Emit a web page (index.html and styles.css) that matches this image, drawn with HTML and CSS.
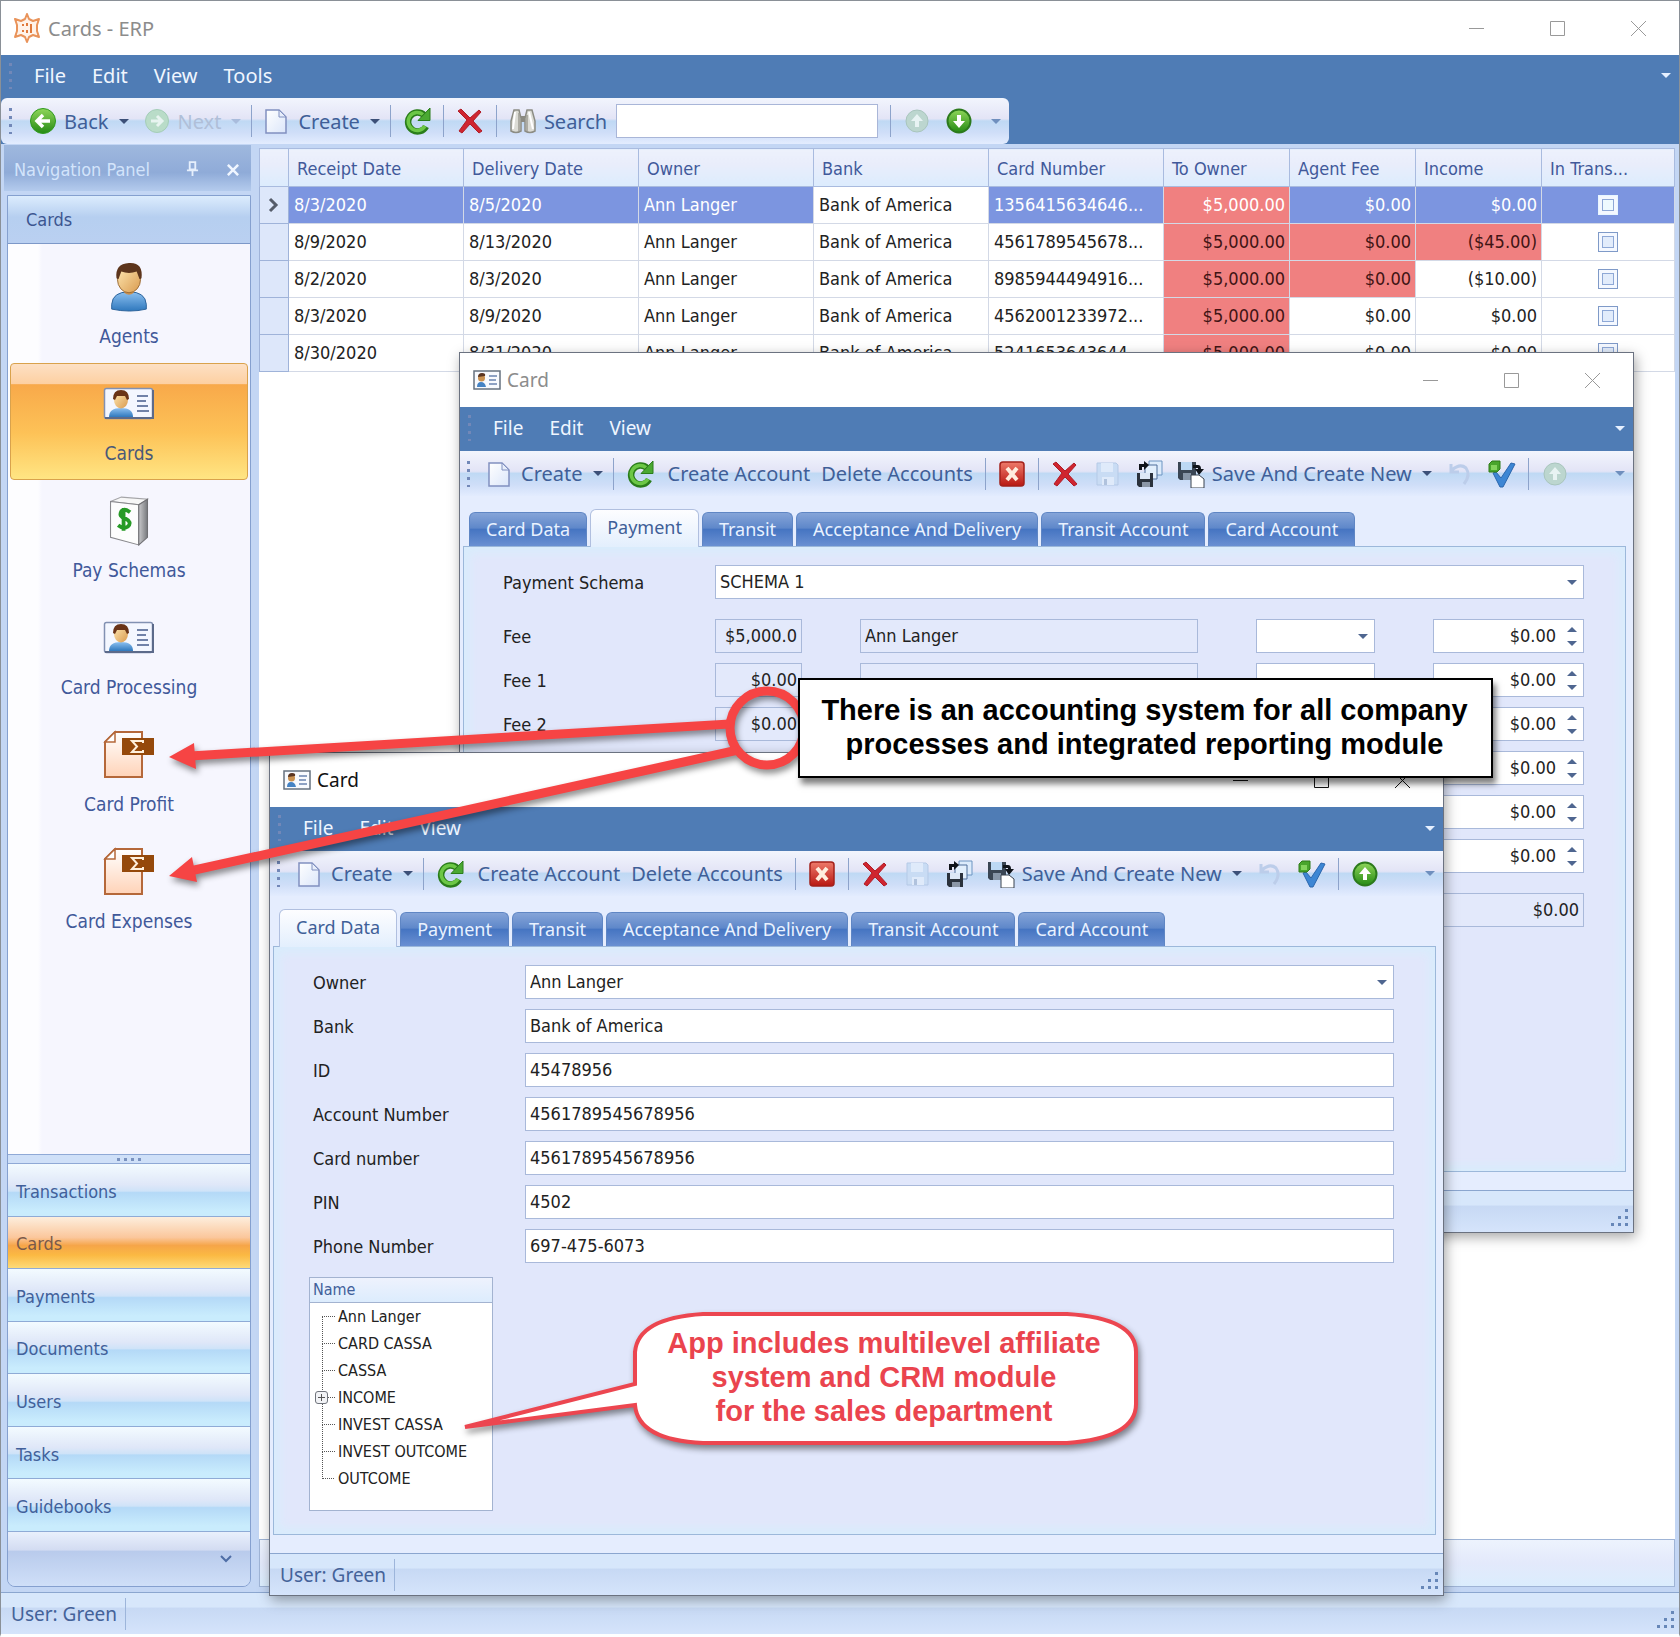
FILE: index.html
```html
<!DOCTYPE html>
<html lang="en">
<head>
<meta charset="utf-8">
<title>Cards - ERP</title>
<link rel="stylesheet" href="styles.css">
</head>
<body>
<svg class="defs" width="0" height="0" aria-hidden="true">
  <defs>
    <linearGradient id="g-green" x1="0" y1="0" x2="0" y2="1"><stop offset="0" stop-color="#8fd65a"/><stop offset="1" stop-color="#258a14"/></linearGradient>
    <linearGradient id="g-red" x1="0" y1="0" x2="0" y2="1"><stop offset="0" stop-color="#ee7a6a"/><stop offset="1" stop-color="#b81812"/></linearGradient>
    <linearGradient id="g-page" x1="0" y1="0" x2="1" y2="1"><stop offset="0" stop-color="#ffffff"/><stop offset="1" stop-color="#dbe6fa"/></linearGradient>
    <linearGradient id="g-blue" x1="0" y1="0" x2="0" y2="1"><stop offset="0" stop-color="#8cc0f0"/><stop offset="1" stop-color="#2f78bd"/></linearGradient>
    <linearGradient id="g-skin" x1="0" y1="0" x2="1" y2="1"><stop offset="0" stop-color="#ffe9b4"/><stop offset="1" stop-color="#d99a4e"/></linearGradient>
    <linearGradient id="g-report" x1="0" y1="0" x2="0" y2="1"><stop offset="0" stop-color="#ffffff"/><stop offset="1" stop-color="#ffd3b8"/></linearGradient>
    <linearGradient id="g-side" x1="0" y1="0" x2="1" y2="0"><stop offset="0" stop-color="#c9c9cc"/><stop offset="1" stop-color="#77797d"/></linearGradient>
  </defs>
  <symbol id="i-gear" viewBox="0 0 28 30"><path d="M12 6L14 1l2 5 4 2 6-2-2 6v6l2 6-6-2-4 2-2 5-2-5-4-2-6 2 2-6v-6L2 6l6 2z" fill="#fff3ea" stroke="#e9935a" stroke-width="2" stroke-linejoin="round"/><path d="M10 11v2m0 4v2m4-9v3m0 4v3m4-9v9" stroke="#e07a3c" stroke-width="2" fill="none"/></symbol>
  <symbol id="i-left" viewBox="0 0 28 28"><circle cx="14" cy="14" r="12.500" fill="url(#g-green)" stroke="#2f9a1e"/><path d="M21 14H8m6-6l-6 6 6 6" fill="none" stroke="#fff" stroke-width="3.500"/></symbol>
  <symbol id="i-right" viewBox="0 0 28 28"><circle cx="14" cy="14" r="11.500" fill="#b9dcc8" stroke="#a4cdb8"/><path d="M8 14h11m-5-5l5 5-5 5" fill="none" stroke="#e8f4f0" stroke-width="3"/></symbol>
  <symbol id="i-up" viewBox="0 0 28 28"><circle cx="14" cy="14" r="11.500" fill="url(#g-green)" stroke="#2c7a1c" stroke-width="2"/><path d="M14 7l6 7h-4v6h-4v-6H8z" fill="#fff"/></symbol>
  <symbol id="i-upoff" viewBox="0 0 28 28"><circle cx="14" cy="14" r="11" fill="#bcd6cf" stroke="#a9c5bd"/><path d="M14 7l6 7h-4v6h-4v-6H8z" fill="#e8f3f3"/></symbol>
  <symbol id="i-down" viewBox="0 0 28 28"><circle cx="14" cy="14" r="11.500" fill="url(#g-green)" stroke="#2c7a1c" stroke-width="2"/><path d="M14 21l6-7h-4V8h-4v6H8z" fill="#fff"/></symbol>
  <symbol id="i-page" viewBox="0 0 24 28"><path d="M2 3h13l7 7v16H2z" fill="url(#g-page)" stroke="#8190c0" stroke-width="1.500"/><path d="M15 3v7h7z" fill="#e8eefb" stroke="#8190c0"/></symbol>
  <symbol id="i-refresh" viewBox="0 0 28 28"><path d="M21 8A9.500 9.500 0 1 0 23 19.500" fill="none" stroke="#2a7d1a" stroke-width="6.500"/><path d="M20 7.500A9 9 0 1 0 22 19" fill="none" stroke="#6cc746" stroke-width="3.500"/><path d="M27 1v12.500H15z" fill="#4aa932" stroke="#2a7d1a"/></symbol>
  <symbol id="i-x" viewBox="0 0 28 28"><path d="M2 4l3-2 9 9 9-8 2 2-8 9 9 10-3 2-9-9-8 9-3-2 8-11z" fill="#cf2530" stroke="#b01c26"/></symbol>
  <symbol id="i-find" viewBox="0 0 28 28"><path d="M5 3h5l2 8v13q-5 3-10 0V14zM18 3h5l3 11v10q-5 3-10 0V11z" fill="#dcdcd6" stroke="#8c8c84" stroke-width="1.500"/><path d="M12 9h4v6h-4z" fill="#8b8a82"/><path d="M6 5L4 22M20 5l4 17" stroke="#fff" stroke-width="2"/><path d="M10 6v18M18 8v16" stroke="#9d9c94" stroke-width="1.500"/></symbol>
  <symbol id="i-close" viewBox="0 0 28 28"><rect x="2" y="2" width="24" height="24" rx="3" fill="url(#g-red)" stroke="#a3201a" stroke-width="1.500"/><path d="M9 8l10 12M19 8L9 20" stroke="#ffeede" stroke-width="4"/></symbol>
  <symbol id="i-saveoff" viewBox="0 0 28 28"><path d="M4 3h19l2 2v20H4z" fill="#c9dcf4" stroke="#b5c9e6"/><path d="M8 3h12v9H8zM9 17h12v8H9z" fill="#dfeafa"/><path d="M11 19h3v6h-3z" fill="#b0c2dd"/></symbol>
  <symbol id="i-savecopy" viewBox="0 0 28 28"><path d="M14 1h13v14H14z" fill="#dcebfb" stroke="#6d95c2"/><path d="M10 5h12v14H10z" fill="#e2effc" stroke="#4f6f9b"/><path d="M2 13h16v14H4l-2-2z" fill="#2b323c"/><path d="M5 13h10v6H5z" fill="#dce7f6"/><path d="M7 22h8v5H7z" fill="#8c97a6"/><path d="M4 10V4h5V1l5 4-5 5V7H7v3z" fill="#10141a"/></symbol>
  <symbol id="i-savenew" viewBox="0 0 28 28"><path d="M1 2h18v18H3l-2-2z" fill="#3a4654"/><path d="M4 2h11v8H4z" fill="#bcd8f4"/><path d="M6 13h8v7H6z" fill="#8796a8"/><path d="M14 15h8l5 4v9H14z" fill="#fff" stroke="#39424e"/><path d="M16 5h5q3 0 3 4h3l-5 6-4-6h3V8h-5z" fill="#10141a"/></symbol>
  <symbol id="i-undo" viewBox="0 0 28 28"><path d="M5 4v8h8M6 10q8-7 14-2 5 7-2 16" fill="none" stroke="#bccdea" stroke-width="3"/></symbol>
  <symbol id="i-check" viewBox="0 0 28 28"><path d="M5 13l3-1 5 6L23 3l4 1-12 23h-3z" fill="#3d86d4" stroke="#2b66ad"/><path d="M1 4l3-3h8v8l-3 3H1z" fill="#49a52c" stroke="#2f7a18"/><path d="M3 5h6v5H3z" fill="#83d35c"/></symbol>
  <symbol id="i-user" viewBox="0 0 40 52"><path d="M2 49V44q1-13 18-13t18 13v5q-17 4-36 0z" fill="url(#g-blue)" stroke="#2a6199"/><path d="M15 28h10v4q-5 4-10 0z" fill="#c98f4e"/><ellipse cx="20" cy="18" rx="12" ry="14" fill="url(#g-skin)" stroke="#9a6a34"/><path d="M7 17Q5 2 20 1t13 16l-2 1-3-8q-8 3-16 0l-3 8z" fill="#5d351c"/></symbol>
  <symbol id="i-card" viewBox="0 0 52 34"><rect x="1.500" y="1.500" width="48" height="30" rx="2" fill="#f4f7ff" stroke="#8291b2" stroke-width="1.500"/><path d="M2 31h48V3" fill="none" stroke="#5c6a8a" stroke-width="2"/><path d="M6 30q0-9 12-9t12 9z" fill="url(#g-blue)"/><ellipse cx="18" cy="13" rx="7" ry="8.500" fill="url(#g-skin)"/><path d="M10 12q0-9 8-9t8 9l-2 1-2-4h-8l-2 4z" fill="#6a3417"/><path d="M34 9h11M34 14h9m-9 5h11m-11 5h12" stroke="#7182a8" stroke-width="2"/></symbol>
  <symbol id="i-cardsm" viewBox="0 0 28 20"><rect x="1" y="1" width="26" height="18" fill="#f8fafe" stroke="#66717f" stroke-width="1.500"/><path d="M4 17q0-5 4-5t5 5z" fill="#4583c4"/><circle cx="8.500" cy="8" r="3.500" fill="#c99150"/><path d="M5 7q0-4 4-4t3 3z" fill="#5b3520"/><path d="M16 6h8m-8 4h7m-7 4h8" stroke="#6a84b0" stroke-width="1.500"/></symbol>
  <symbol id="i-pay" viewBox="0 0 38 46"><path d="M2 5L12 1l24 2-8 5z" fill="#f7f7f7" stroke="#a5a5a8"/><path d="M2 5l26 3v37L2 38z" fill="#fdfdfd" stroke="#88888c"/><path d="M28 8l8-5v35l-8 7z" fill="url(#g-side)" stroke="#707074"/><path d="M20 15q-5-4-8-1-3 5 4 7 6 3 2 7-4 3-9-1m5-16v21" fill="none" stroke="#279a26" stroke-width="3.500"/></symbol>
  <symbol id="i-report" viewBox="0 0 52 48"><path d="M12 1h27v45H2V11z" fill="url(#g-report)" stroke="#b5683a" stroke-width="2"/><path d="M12 1v10H2z" fill="#fff" stroke="#b5683a" stroke-width="1.500"/><rect x="19" y="7" width="32" height="17" fill="#95490b"/><path d="M40 12v-2H29l5 5.500-5 5.500h11v-2" fill="none" stroke="#fff0dc" stroke-width="2"/></symbol>
  <symbol id="i-min" viewBox="0 0 17 17"><path d="M1 8.500h15" stroke="currentColor"/></symbol>
  <symbol id="i-max" viewBox="0 0 17 17"><path d="M1.500 1.500h14v14h-14z" fill="none" stroke="currentColor"/></symbol>
  <symbol id="i-cls" viewBox="0 0 17 17"><path d="M1 1l15 15M16 1L1 16" stroke="currentColor"/></symbol>
  <symbol id="i-grip" viewBox="0 0 20 20"><path d="M15 1h3v3h-3zM8 8h3v3H8zm7 0h3v3h-3zM1 15h3v3H1zm7 0h3v3H8zm7 0h3v3h-3z" fill="#6787b8"/></symbol>
</svg>

<main class="app">
  <header class="titlebar">
    <svg class="app-icon"><use href="#i-gear"/></svg>
    <h1 class="title">Cards - ERP</h1>
    <div class="winctl">
      <button aria-label="Minimize"><svg><use href="#i-min"/></svg></button>
      <button aria-label="Maximize"><svg><use href="#i-max"/></svg></button>
      <button aria-label="Close"><svg><use href="#i-cls"/></svg></button>
    </div>
  </header>
  <nav class="menubar menubar-main">
    <i class="grip"></i>
    <button>File</button><button>Edit</button><button>View</button><button>Tools</button>
    <i class="more"></i>
  </nav>
  <div class="toolstrip">
    <div class="toolbar toolbar-main">
      <i class="grip"></i>
      <button><svg class="ic"><use href="#i-left"/></svg>Back<i class="arr"></i></button>
      <button class="off" disabled><svg class="ic"><use href="#i-right"/></svg>Next<i class="arr"></i></button>
      <i class="sep"></i>
      <button class="new"><svg class="ic page"><use href="#i-page"/></svg>Create<i class="arr"></i></button>
      <i class="sep"></i>
      <button aria-label="Refresh"><svg class="ic"><use href="#i-refresh"/></svg></button>
      <i class="sep"></i>
      <button aria-label="Delete"><svg class="ic"><use href="#i-x"/></svg></button>
      <i class="sep"></i>
      <label class="search"><svg class="ic"><use href="#i-find"/></svg>Search<input type="text"></label>
      <i class="sep"></i>
      <button aria-label="Previous record" disabled><svg class="ic"><use href="#i-upoff"/></svg></button>
      <button aria-label="Next record"><svg class="ic"><use href="#i-down"/></svg></button>
      <i class="more"></i>
    </div>
  </div>

  <div class="workspace">
    <aside class="nav">
      <div class="nav-head">Navigation Panel
        <svg class="pin" viewBox="0 0 14 18"><path d="M4 1h6v8H4zM1 10h12M7 10v6" fill="none" stroke="#e6effc" stroke-width="2"/></svg>
        <svg class="nx" viewBox="0 0 14 14"><path d="M1 1l12 12M13 1L1 13" stroke="#f0f6ff" stroke-width="3"/></svg>
      </div>
      <div class="nav-box">
        <h2 class="nav-group">Cards</h2>
        <div class="nav-items">
          <button><svg class="ni"><use href="#i-user"/></svg>Agents</button>
          <button class="on"><svg class="ni"><use href="#i-card"/></svg>Cards</button>
          <button><svg class="ni"><use href="#i-pay"/></svg>Pay Schemas</button>
          <button><svg class="ni"><use href="#i-card"/></svg>Card Processing</button>
          <button><svg class="ni"><use href="#i-report"/></svg>Card Profit</button>
          <button><svg class="ni"><use href="#i-report"/></svg>Card Expenses</button>
        </div>
        <div class="nav-split"><i></i><i></i><i></i><i></i></div>
        <div class="nav-tabs">
          <button>Transactions</button><button class="on">Cards</button><button>Payments</button><button>Documents</button><button>Users</button><button>Tasks</button><button>Guidebooks</button>
        </div>
        <div class="nav-foot"><svg viewBox="0 0 12 8"><path d="M1 1l5 5 5-5" fill="none" stroke="#4f6ea6" stroke-width="2"/></svg></div>
      </div>
    </aside>
    <section class="content">
      <table class="grid">
        <colgroup><col class="c-ind"><col class="c-w"><col class="c-w"><col class="c-w"><col class="c-w"><col class="c-w"><col class="c-n"><col class="c-n"><col class="c-n"><col></colgroup>
        <thead><tr><th></th><th>Receipt Date</th><th>Delivery Date</th><th>Owner</th><th>Bank</th><th>Card Number</th><th>To Owner</th><th>Agent Fee</th><th>Income</th><th>In Trans...</th></tr></thead>
        <tbody>
          <tr class="sel"><td class="ind"><svg viewBox="0 0 12 16"><path d="M2 2l6 6-6 6" fill="none" stroke="#555c6a" stroke-width="3"/></svg></td><td>8/3/2020</td><td>8/5/2020</td><td>Ann Langer</td><td class="focus">Bank of America</td><td>1356415634646...</td><td class="num bad">$5,000.00</td><td class="num">$0.00</td><td class="num">$0.00</td><td class="chk"><input type="checkbox" aria-label="In transit"></td></tr>
          <tr><td class="ind"></td><td>8/9/2020</td><td>8/13/2020</td><td>Ann Langer</td><td>Bank of America</td><td>4561789545678...</td><td class="num bad">$5,000.00</td><td class="num bad">$0.00</td><td class="num bad">($45.00)</td><td class="chk"><input type="checkbox" aria-label="In transit"></td></tr>
          <tr><td class="ind"></td><td>8/2/2020</td><td>8/3/2020</td><td>Ann Langer</td><td>Bank of America</td><td>8985944494916...</td><td class="num bad">$5,000.00</td><td class="num bad">$0.00</td><td class="num">($10.00)</td><td class="chk"><input type="checkbox" aria-label="In transit"></td></tr>
          <tr><td class="ind"></td><td>8/3/2020</td><td>8/9/2020</td><td>Ann Langer</td><td>Bank of America</td><td>4562001233972...</td><td class="num bad">$5,000.00</td><td class="num">$0.00</td><td class="num">$0.00</td><td class="chk"><input type="checkbox" aria-label="In transit"></td></tr>
          <tr><td class="ind"></td><td>8/30/2020</td><td>8/31/2020</td><td>Ann Langer</td><td>Bank of America</td><td>5241653643644...</td><td class="num bad">$5,000.00</td><td class="num">$0.00</td><td class="num">$0.00</td><td class="chk"><input type="checkbox" aria-label="In transit"></td></tr>
        </tbody>
      </table>
      <div class="grid-foot"></div>
    </section>
  </div>
  <footer class="status"><span>User: Green</span><svg class="resize"><use href="#i-grip"/></svg></footer>
</main>

<section class="win win-payment" aria-label="Card payment">
  <header class="titlebar">
    <svg class="card-icon"><use href="#i-cardsm"/></svg>
    <h2 class="title">Card</h2>
    <div class="winctl">
      <button aria-label="Minimize"><svg><use href="#i-min"/></svg></button>
      <button aria-label="Maximize"><svg><use href="#i-max"/></svg></button>
      <button aria-label="Close"><svg><use href="#i-cls"/></svg></button>
    </div>
  </header>
  <nav class="menubar"><i class="grip"></i><button>File</button><button>Edit</button><button>View</button><i class="more"></i></nav>
  <div class="toolbar">
    <i class="grip"></i>
    <button class="new"><svg class="ic page"><use href="#i-page"/></svg>Create<i class="arr"></i></button>
    <i class="sep"></i>
    <button class="account"><svg class="ic"><use href="#i-refresh"/></svg>Create Account</button>
    <button>Delete Accounts</button>
    <i class="sep"></i>
    <button aria-label="Close record"><svg class="ic"><use href="#i-close"/></svg></button>
    <i class="sep"></i>
    <button aria-label="Delete"><svg class="ic"><use href="#i-x"/></svg></button>
    <button aria-label="Save" disabled><svg class="ic"><use href="#i-saveoff"/></svg></button>
    <button aria-label="Save and close"><svg class="ic"><use href="#i-savecopy"/></svg></button>
    <button><svg class="ic"><use href="#i-savenew"/></svg>Save And Create New<i class="arr"></i></button>
    <button aria-label="Undo" disabled><svg class="ic"><use href="#i-undo"/></svg></button>
    <button aria-label="Validate"><svg class="ic"><use href="#i-check"/></svg></button>
    <i class="sep"></i>
    <button aria-label="Previous record" disabled><svg class="ic"><use href="#i-upoff"/></svg></button>
    <i class="more"></i>
  </div>
  <div class="tabs"><button>Card Data</button><button class="on">Payment</button><button>Transit</button><button>Acceptance And Delivery</button><button>Transit Account</button><button>Card Account</button></div>
  <div class="pane">
    <div class="form">
      <label for="schema">Payment Schema</label>
      <span class="drop"><select id="schema"><option>SCHEMA 1</option></select></span>
    </div>
    <div class="fees">
      <label for="f0">Fee</label><input id="f0" class="ro amt" value="$5,000.0" readonly><input class="ro" aria-label="Payee" value="Ann Langer" readonly><span class="drop"><select aria-label="Type"><option></option></select></span><span class="spin"><input aria-label="Amount" value="$0.00"></span>
      <label for="f1">Fee 1</label><input id="f1" class="ro amt" value="$0.00" readonly><input class="ro" aria-label="Payee 1" readonly><span class="drop"><select aria-label="Type 1"><option></option></select></span><span class="spin"><input aria-label="Amount 1" value="$0.00"></span>
      <label for="f2">Fee 2</label><input id="f2" class="ro amt" value="$0.00" readonly><input class="ro" aria-label="Payee 2" readonly><span class="drop"><select aria-label="Type 2"><option></option></select></span><span class="spin"><input aria-label="Amount 2" value="$0.00"></span>
      <span class="spin last"><input aria-label="Amount 3" value="$0.00"></span>
      <span class="spin last"><input aria-label="Amount 4" value="$0.00"></span>
      <span class="spin last"><input aria-label="Amount 5" value="$0.00"></span>
    </div>
    <div class="fees total"><input class="ro amt last" aria-label="Total" value="$0.00" readonly></div>
  </div>
  <footer class="status"><svg class="resize"><use href="#i-grip"/></svg></footer>
</section>

<section class="win win-data" aria-label="Card data">
  <header class="titlebar">
    <svg class="card-icon"><use href="#i-cardsm"/></svg>
    <h2 class="title">Card</h2>
    <div class="winctl">
      <button aria-label="Minimize"><svg><use href="#i-min"/></svg></button>
      <button aria-label="Maximize"><svg><use href="#i-max"/></svg></button>
      <button aria-label="Close"><svg><use href="#i-cls"/></svg></button>
    </div>
  </header>
  <nav class="menubar"><i class="grip"></i><button>File</button><button>Edit</button><button>View</button><i class="more"></i></nav>
  <div class="toolbar">
    <i class="grip"></i>
    <button class="new"><svg class="ic page"><use href="#i-page"/></svg>Create<i class="arr"></i></button>
    <i class="sep"></i>
    <button class="account"><svg class="ic"><use href="#i-refresh"/></svg>Create Account</button>
    <button>Delete Accounts</button>
    <i class="sep"></i>
    <button aria-label="Close record"><svg class="ic"><use href="#i-close"/></svg></button>
    <i class="sep"></i>
    <button aria-label="Delete"><svg class="ic"><use href="#i-x"/></svg></button>
    <button aria-label="Save" disabled><svg class="ic"><use href="#i-saveoff"/></svg></button>
    <button aria-label="Save and close"><svg class="ic"><use href="#i-savecopy"/></svg></button>
    <button><svg class="ic"><use href="#i-savenew"/></svg>Save And Create New<i class="arr"></i></button>
    <button aria-label="Undo" disabled><svg class="ic"><use href="#i-undo"/></svg></button>
    <button aria-label="Validate"><svg class="ic"><use href="#i-check"/></svg></button>
    <i class="sep"></i>
    <button aria-label="Previous record"><svg class="ic"><use href="#i-up"/></svg></button>
    <i class="more"></i>
  </div>
  <div class="tabs"><button class="on">Card Data</button><button>Payment</button><button>Transit</button><button>Acceptance And Delivery</button><button>Transit Account</button><button>Card Account</button></div>
  <div class="pane">
    <div class="form">
      <label for="owner">Owner</label><span class="drop"><select id="owner"><option>Ann Langer</option></select></span>
      <label for="bank">Bank</label><input id="bank" value="Bank of America">
      <label for="id">ID</label><input id="id" value="45478956">
      <label for="acc">Account Number</label><input id="acc" value="4561789545678956">
      <label for="cardno">Card number</label><input id="cardno" value="4561789545678956">
      <label for="pin">PIN</label><input id="pin" value="4502">
      <label for="phone">Phone Number</label><input id="phone" value="697-475-6073">
    </div>
    <div class="tree">
      <div class="tree-head">Name</div>
      <ul>
        <li>Ann Langer</li><li>CARD CASSA</li><li>CASSA</li><li><button class="plus" aria-label="Expand"></button>INCOME</li><li>INVEST CASSA</li><li>INVEST OUTCOME</li><li>OUTCOME</li>
      </ul>
    </div>
  </div>
  <footer class="status"><span>User: Green</span><svg class="resize"><use href="#i-grip"/></svg></footer>
</section>

<svg class="marks" width="1140" height="1460" viewBox="0 0 1140 1460" aria-hidden="true">
  <g fill="none" stroke="#f64444" stroke-width="9">
    <circle cx="767" cy="728" r="37"/>
    <path d="M730 724L190 756M738 750L190 871"/>
  </g>
  <path d="M169 757l25-14 2 26zM169 876l23-19 5 25z" fill="#f64444"/>
  <path d="M703 1314H1067Q1136 1318 1136 1352V1404Q1136 1438 1067 1443H703Q638 1440 635 1405L465 1427 635 1384V1352Q638 1318 703 1314z" fill="#fff" stroke="#ec4650" stroke-width="4"/>
</svg>
<p class="note note-box">There is an accounting system for all company<br>processes and integrated reporting module</p>
<p class="note note-bubble">App includes multilevel affiliate<br>system and CRM module<br>for the sales department</p>
</body>
</html>
```
FILE: styles.css
```css
* { box-sizing: border-box; }

body {
  margin: 0;
  position: relative;
  font-family: "DejaVu Sans Condensed", "Noto Sans", sans-serif;
  font-size: 18px;
  color: #222;
  background: #fff;
}

button, input, select { font: inherit; color: inherit; margin: 0; }
button { background: none; border: 0; padding: 0; white-space: nowrap; }
h1, h2, p, ul { margin: 0; padding: 0; font-weight: normal; }
.defs { position: absolute; }

/* Main window */
.app {
  min-height: 100vh;
  display: flex;
  flex-direction: column;
  border: solid #8a9097;
  border-width: 1px 1px 0;
  border-bottom: 3px solid #fff;
}

.titlebar {
  height: 54px;
  flex: none;
  display: flex;
  align-items: center;
  padding: 0 12px;
  background: #fff;
  font-family: "Noto Sans", sans-serif;
  font-size: 20px;
  color: #8c8c8c;
}
.title { font-size: 20px; flex: 1; }
.app-icon { width: 28px; height: 30px; margin-right: 7px; }
.card-icon { width: 28px; height: 20px; margin-right: 6px; }
.winctl { display: flex; gap: 64px; padding-right: 20px; color: #999; }
.winctl svg { display: block; width: 17px; height: 17px; }

.menubar {
  height: 43px;
  flex: none;
  display: flex;
  align-items: center;
  gap: 26px;
  padding: 0 8px 2px;
  background: #4f7cb5;
  color: #f0f6ff;
  font-family: "Noto Sans", sans-serif;
  font-size: 19px;
}
.menubar .grip { margin-right: -4px; }
.menubar-main { font-size: 20px; }
.more {
  margin-left: auto;
  border: 5px solid transparent;
  border-top-color: #6f8fbe;
  border-bottom: 0;
}
.menubar .more { border-top-color: #e6f0ff; }
.grip {
  width: 3px;
  height: 26px;
  background: repeating-linear-gradient(#7288b8 0 3px, transparent 3px 8px);
}

.toolstrip { background: #4f7cb5; display: flex; flex: none; }
.toolbar {
  height: 46px;
  flex: none;
  display: flex;
  align-items: center;
  gap: 14px;
  padding: 0 8px;
  background: linear-gradient(#f2f5fd, #e3e4f6 45%, #bfd9f4 50%, #cfdef8 75%, #e3ecfe);
  color: #3f5f98;
  font-family: "Noto Sans", sans-serif;
  font-size: 20px;
}
.toolbar-main { border-radius: 6px; }
.toolbar > .grip { margin-right: 3px; }
.toolbar button, .search { display: flex; align-items: center; gap: 7px; }
.toolbar .new { gap: 10px; }
.toolbar .account { gap: 14px; margin-right: -3px; }
.toolbar .arr {
  margin-left: 3px;
  border: 5px solid transparent;
  border-top-color: #3c5078;
  border-bottom: 0;
}
.toolbar .new .arr { margin-left: 0; }
.toolbar .off { color: #b0bfd8; }
.toolbar .off .arr { border-top-color: #a9bcdc; }
.ic { width: 28px; height: 28px; flex: none; }
.page { width: 24px; }
.sep { width: 1px; height: 32px; background: #8da3cb; margin: 0 -2px; }
.new + .sep { margin-left: -4px; }
.toolbar-main .off + .sep { margin-left: -4px; }
.search input {
  width: 262px;
  height: 34px;
  margin-left: 2px;
  border: 1px solid #a9b6d8;
  background: #fff;
}
.toolbar-main .more { margin-left: 4px; }

.workspace { flex: 1; display: flex; background: #c3d6f4; }

/* Navigation */
.nav {
  width: 254px;
  flex: none;
  display: flex;
  flex-direction: column;
  padding: 1px 4px 5px 3px;
}
.nav-head {
  height: 46px;
  display: flex;
  align-items: center;
  padding: 3px 12px 0 10px;
  background: linear-gradient(#9fb8de, #8fabd8 60%, #b4cbed);
  color: #d3e4fb;
  white-space: nowrap;
}
.pin { width: 13px; height: 17px; margin-left: auto; }
.nx { width: 12px; height: 12px; margin-left: 28px; }
.nav-box {
  flex: 1;
  display: flex;
  flex-direction: column;
  margin: 4px 0 0 3px;
  border: 1px solid #85a0cf;
  border-radius: 0 0 8px 8px;
  overflow: hidden;
}
.nav-group {
  height: 48px;
  line-height: 48px;
  padding-left: 18px;
  font-size: 18px;
  color: #3c5690;
  background: linear-gradient(#dcecfd, #b6cff0 45%, #bad0f1);
  border-bottom: 1px solid #7d98c8;
}
.nav-items {
  flex: 1;
  padding: 2px 2px 0;
  background: linear-gradient(90deg, #fdfdff 30px, #f6f6fe 34px);
}
.nav-items button {
  width: 100%;
  height: 117px;
  display: flex;
  flex-direction: column;
  align-items: center;
  padding-top: 15px;
  font-size: 19px;
  color: #41599a;
  border: 1px solid transparent;
}
.nav-items .ni { width: 52px; height: 50px; margin-bottom: 13px; }
.nav-items .on {
  color: #4a5878;
  border-color: #d9a24c;
  border-radius: 4px;
  background: linear-gradient(#fde0c4, #fdd0a2 17%, #f8a94a 18%, #fdc257 60%, #ffe583);
}
.nav-split {
  height: 10px;
  display: flex;
  justify-content: center;
  align-items: center;
  gap: 4px;
  background: #cfe0f8;
  border: solid #8fa9d6;
  border-width: 1px 0;
}
.nav-split i { width: 3px; height: 3px; background: #7b93c0; }
.nav-tabs { height: 368px; display: grid; grid-auto-rows: 1fr; }
.nav-tabs button {
  text-align: left;
  padding: 3px 0 0 8px;
  color: #41609a;
  border-bottom: 1px solid #8fabd6;
  background: linear-gradient(#f3fbff, #dfe7f8 40%, #cfe3f8 52%, #b4d9f7 55%, #c9ecfd 90%);
}
.nav-tabs .on {
  color: #7a5a4a;
  background: linear-gradient(#fdeedd, #fbc79c 40%, #f6a548 56%, #fbb943 75%, #fddb78);
}
.nav-foot {
  height: 54px;
  display: flex;
  align-items: center;
  justify-content: flex-end;
  padding-right: 18px;
  background: linear-gradient(#e9f0fc, #d3dcf2 33%, #b9cbec 36%, #cfdff8);
}
.nav-foot svg { width: 12px; height: 8px; }

/* Data grid */
.content {
  flex: 1;
  min-width: 0;
  display: flex;
  flex-direction: column;
  justify-content: space-between;
  margin: 4px 4px 5px 4px;
  background: #fff;
}
.grid { width: 100%; table-layout: fixed; border-collapse: collapse; }
.c-ind { width: 29px; }
.c-w { width: 175px; }
.c-n { width: 126px; }
.grid th {
  height: 38px;
  padding: 2px 8px 0;
  text-align: left;
  font-weight: normal;
  color: #41599a;
  background: linear-gradient(#edf1fc, #e9edfb 40%, #dcecfd);
  border: 1px solid #a9bbdf;
}
.grid td {
  height: 37px;
  padding: 0 5px 1px;
  white-space: nowrap;
  overflow: hidden;
  border: 1px solid #d3d9e6;
}
.grid .ind { background: #dde7fa; border-color: #9fb3d9; text-align: center; }
.ind svg { width: 12px; height: 16px; display: block; margin: auto; }
.grid .num { text-align: right; padding-right: 4px; }
.grid .bad { background: #f08080; color: #401414; }
.grid .sel td { background: #7c95e0; color: #fff; }
.grid .sel .ind { background: #dde7fa; }
.grid .sel .focus { background: #fff; color: #222; }
.grid .sel .bad { background: #f08080; }
.chk { text-align: center; }
.chk input {
  appearance: none;
  display: block;
  width: 20px;
  height: 20px;
  margin: auto;
  border: 1px solid #7f9ac8;
  background: #e2ecfb;
  box-shadow: inset 0 0 0 3px #f4f8ff, inset 0 0 0 4px #8ea8d6;
}
.sel .chk input { border-color: #e8f6ff; background: #eefaff; }
.grid-foot {
  height: 48px;
  border: 1px solid #9fb4d6;
  background: linear-gradient(#edf3fd, #e3e9fb 50%, #dbedfd);
}

.status {
  height: 42px;
  flex: none;
  display: flex;
  align-items: center;
  padding: 0 3px 0 10px;
  font-family: "Noto Sans", sans-serif;
  font-size: 19px;
  color: #446299;
  border-top: 1px solid #8ba6cf;
  background: linear-gradient(#d7e7fb 34%, #c7d9f4 37%, #d5e4fb);
}
.status span { line-height: 32px; padding-right: 8px; border-right: 1px solid #9db5da; }
.resize { width: 20px; height: 20px; margin-left: auto; align-self: flex-end; margin-bottom: 4px; }

/* Child windows */
.win {
  position: absolute;
  width: 1175px;
  display: flex;
  flex-direction: column;
  background: #e5edfe;
  border: 1px solid #6b7280;
  box-shadow: 2px 4px 12px rgba(0, 0, 0, .35);
}
.win-payment { left: 459px; top: 352px; min-height: 881px; }
.win-data { left: 269px; top: 752px; min-height: 844px; }
.win-data .titlebar, .win-data .winctl { color: #111; }
.win .titlebar { padding: 0 12px 0 13px; }
.win .titlebar .title { font-size: 19px; }
.win .menubar { height: 44px; }
.win .toolbar { height: 45px; padding-left: 7px; }

.tabs { display: flex; align-items: flex-end; gap: 3px; height: 50px; padding: 0 9px; flex: none; }
.tabs button {
  height: 34px;
  padding: 0 16px 1px;
  font-family: "Noto Sans", sans-serif;
  color: #e9f2ff;
  border: 1px solid #5f86c4;
  border-bottom: 0;
  border-radius: 6px 6px 0 0;
  background: linear-gradient(#85a4d8, #5f88ca 45%, #4675c2 50%, #6a90d2);
}
.tabs .on {
  height: 38px;
  padding-bottom: 3px;
  color: #3f5f98;
  border-color: #b0bfdf;
  background: linear-gradient(#fdfdff, #e3effd);
  position: relative;
  margin-bottom: -1px;
}
.pane {
  flex: 1;
  margin: 0 7px 18px 3px;
  padding: 18px 41px 0 39px;
  border: 1px solid #9cb8da;
  background: #e1e7fb;
  box-shadow: inset 0 0 8px 6px #d9ecfc;
}
.form { display: grid; grid-template-columns: 212px 1fr; row-gap: 10px; align-items: center; }
.pane input, .pane select {
  width: 100%;
  height: 34px;
  padding: 0 4px 1px;
  border: 1px solid #a9b9da;
  border-radius: 0;
  background: #fff;
  appearance: none;
}
.pane .ro { background: #e3e9fb; }
.pane .amt { text-align: right; }
.drop, .spin { position: relative; display: block; }
.drop::after, .spin::after, .spin::before {
  content: "";
  position: absolute;
  right: 7px;
  top: 15px;
  border: 5px solid transparent;
  border-top-color: #4f6690;
  border-bottom: 0;
}
.spin::after { top: 22px; }
.spin::before { top: 8px; border: 5px solid transparent; border-bottom-color: #4f6690; border-top: 0; }
.pane .spin input { text-align: right; padding-right: 27px; }
.fees {
  display: grid;
  grid-template-columns: 154px 87px 1fr 119px 151px;
  column-gap: 58px;
  row-gap: 10px;
  align-items: center;
  margin-top: 20px;
}
.last { grid-column: 5; }

.tree {
  width: 184px;
  height: 234px;
  margin: 14px 0 0 -4px;
  border: 1px solid #a3b3d0;
  background: #fff;
  font-size: 16px;
}
.tree-head {
  height: 25px;
  line-height: 23px;
  padding-left: 3px;
  color: #41609a;
  background: linear-gradient(#eef2fd, #dcecfd);
  border-bottom: 1px solid #a3b3d0;
}
.tree ul { list-style: none; padding: 0 0 0 12px; }
.tree li { position: relative; height: 27px; line-height: 27px; padding-left: 16px; white-space: nowrap; }
.tree li::before {
  content: "";
  position: absolute;
  left: 0;
  top: 13px;
  width: 12px;
  height: 27px;
  border: dotted #555;
  border-width: 1px 0 0 1px;
}
.tree li:last-child::before { height: 1px; border-left: 0; }
.plus {
  position: absolute;
  left: -7px;
  top: 7px;
  width: 13px;
  height: 13px;
  border: 1px solid #70747c;
  border-radius: 3px;
  background:
    linear-gradient(#555, #555) center / 7px 1px no-repeat,
    linear-gradient(#555, #555) center / 1px 7px no-repeat,
    #f2f3f6;
}

/* Annotations over the windows */
.marks { position: absolute; left: 0; top: 0; filter: drop-shadow(2px 4px 3px rgba(0, 0, 0, .45)); pointer-events: none; }
.note {
  position: absolute;
  font: bold 29px/34px "Liberation Sans", Arial, sans-serif;
  text-align: center;
  white-space: nowrap;
}
.note-box {
  left: 798px;
  top: 678px;
  width: 695px;
  padding: 13px 2px 15px 0;
  color: #000;
  background: #fff;
  border: 2px solid #000;
  box-shadow: 3px 6px 6px rgba(0, 0, 0, .5);
}
.note-bubble { left: 634px; top: 1326px; width: 500px; color: #ea444e; }
```
